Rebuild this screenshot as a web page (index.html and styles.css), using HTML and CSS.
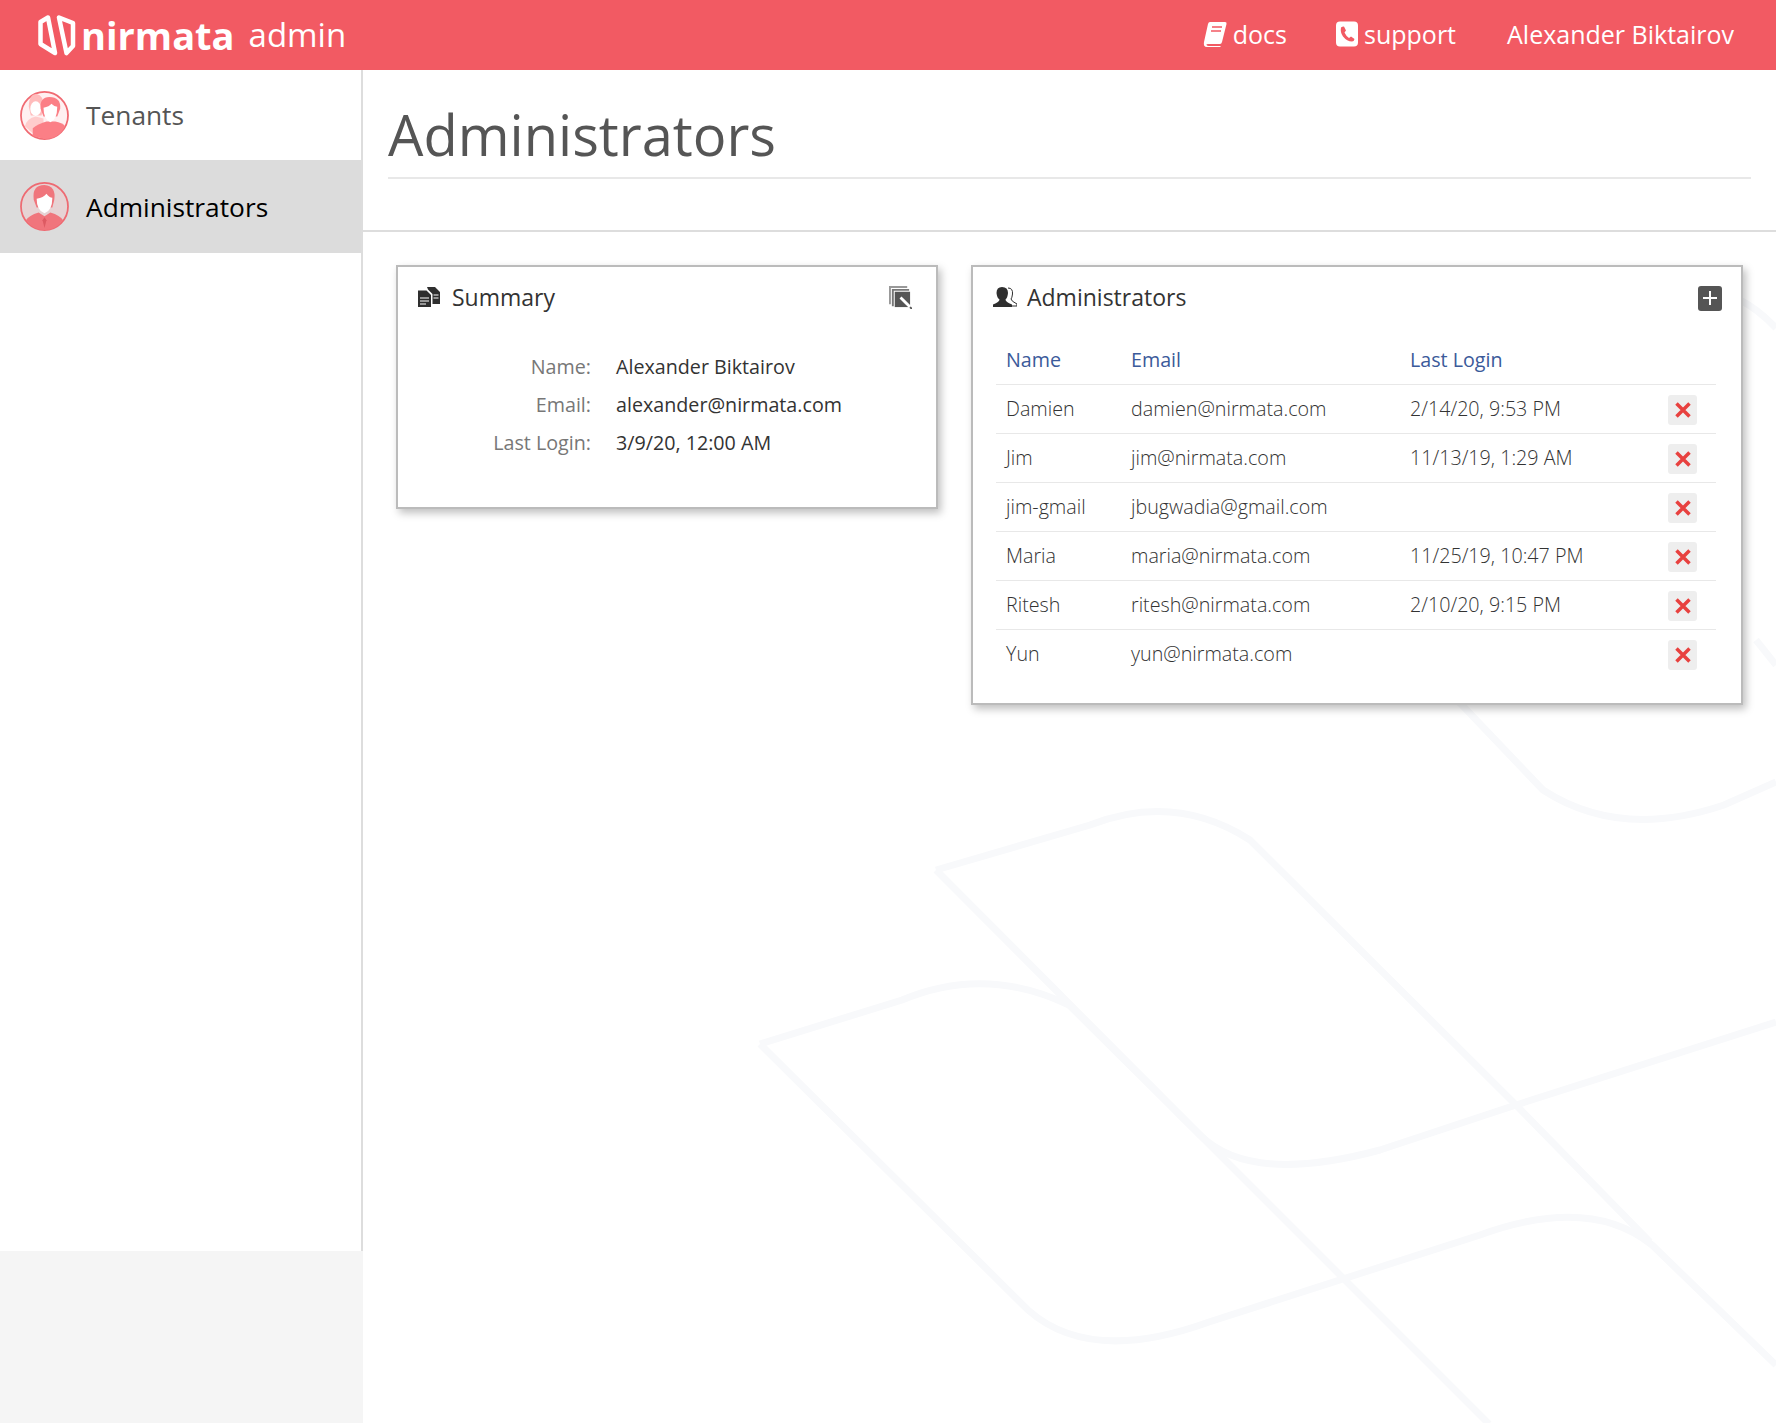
FILE: index.html
```html
<!DOCTYPE html>
<html lang="en">
<head>
    <meta charset="UTF-8">
    <meta name="viewport" content="width=device-width, initial-scale=1.0">
    <title>Administrators</title>
    <link rel="stylesheet" href="styles.css">
</head>
<body>
    <svg class="watermark" viewBox="0 0 1776 1423" fill="none" stroke="#f8f9fb" stroke-width="7">
        <path d="M936 870 L1090 825 Q1175 792 1250 840 L1516 1105 L1776 1022"/>
        <path d="M936 870 L1200 1135 Q1250 1185 1380 1150 L1516 1105 L1650 1242"/>
        <path d="M760 1044 L902 1000 Q985 965 1069 1005 L1200 1135 L1489 1424"/>
        <path d="M760 1044 L1028 1310 Q1090 1365 1209 1322 L1480 1235 Q1590 1195 1652 1245 L1776 1365"/>
        <path d="M1300 560 L1462 705 L1543 790 Q1620 840 1724 805 L1776 782"/>
        <path d="M1700 290 Q1740 290 1776 328"/>
        <path d="M1756 640 L1776 665"/>
    </svg>

    <header class="topbar">
        <div class="brand">
            <svg class="brand-mark" viewBox="0 0 40 42" fill="none" stroke="#fff" stroke-width="4.500" stroke-linejoin="round" stroke-linecap="round">
                <path d="M10 3.500 L2.500 8 V30 L17 39 Z"/>
                <path d="M21 3.500 L35 9 V32 L28.500 39 Z"/>
            </svg>
            <span class="brand-name">nirmata</span>
            <span class="brand-sub">admin</span>
        </div>
        <nav class="topnav">
            <a class="topnav-link docs-link">
                <svg class="topnav-icon" viewBox="0 0 24 26" fill="#fff">
                    <path d="M7 1 H22 Q24 1 23.500 3 L19 21 Q18.500 23 17 23 H5 Q3 23 3.500 24 Q4 25 6 25 H18 L17 26 H4 Q0 26 1 21 L5 3 Q5.500 1 7 1 Z"/>
                    <path d="M9 6 H19 M8 10 H18" stroke="#f25a63" stroke-width="1.600"/>
                </svg>
                docs
            </a>
            <a class="topnav-link">
                <svg class="topnav-icon phone" viewBox="0 0 22 25" fill="#fff">
                    <path fill-rule="evenodd" d="M4 0 H18 Q22 0 22 4 V21 Q22 25 18 25 H4 Q0 25 0 21 V4 Q0 0 4 0 Z M5 6 Q4 11 7 15 Q11 20 16 20 Q18 20 18.500 17.500 L15 15 L13 16.500 Q10 14.500 8.500 11 L10 9 L8 5 Q6 5 5 6 Z"/>
                </svg>
                support
            </a>
            <a class="topnav-link">Alexander Biktairov</a>
        </nav>
    </header>

    <div class="layout">
        <aside class="sidebar">
            <div class="side-menu">
                <a class="side-item">
                    <svg class="avatar" viewBox="0 0 50 50">
                        <circle cx="25" cy="25" r="24" fill="#fff0f1" stroke="#f06a72" stroke-width="1.800"/>
                        <path d="M5 36 Q7 28 16 26 L24 28 V44 L13 43 Z" fill="#fcc"/>
                        <path d="M9 16 Q9 3 17 3 Q24 4 24 16 L22 25 H11 Z" fill="#fbb"/>
                        <ellipse cx="16" cy="18" rx="5.500" ry="7.500" fill="#fff"/>
                        <path d="M13 46 L13 38 Q19 33 27 31 H36 Q43 32 46 36 Q40 49 25 49 Z" fill="#fb7f86"/>
                        <path d="M21 18 Q20 6 30 6 Q42 6 41 18 L38 26 H24 Z" fill="#fb7f86"/>
                        <path d="M24 17 Q30 16 32 13 Q35 16 38 16 Q38 29 31 32 Q24 29 24 17 Z" fill="#fff"/>
                    </svg>
                    Tenants
                </a>
                <a class="side-item active">
                    <svg class="avatar" viewBox="0 0 50 50">
                        <circle cx="25" cy="25" r="24" fill="#e6d3d4" stroke="#ee6a72" stroke-width="1.800"/>
                        <path d="M14 18 Q12 3 25 3 Q37 4 35 18 L33 26 H17 Z" fill="#f0757c"/>
                        <path d="M17 17 Q24 16 27 12 Q30 16 33 16 Q33 29 25 32 Q17 29 17 17 Z" fill="#fff"/>
                        <path d="M6 39 Q9 34 19 31 L25 35 L31 31 Q41 34 44 39 Q36 49 25 49 Q14 49 6 39 Z" fill="#f0757c"/>
                        <path d="M25 36 L23 39 L25 47 L27 39 Z" fill="#dd5a62"/>
                    </svg>
                    Administrators
                </a>
            </div>
        </aside>

        <main class="main">
            <div class="page-head">
                <h1>Administrators</h1>
            </div>
            <div class="cards">
                <section class="card card-summary">
                    <div class="card-title">
                        <svg class="title-icon" viewBox="0 0 22 20" fill="#2f2f2f">
                            <path d="M9 0 H17 L22 5 V17 H14.500 V7 L10 2.500 Z"/>
                            <path d="M0 3.500 H8.500 L13 8 V20 H0 Z"/>
                            <path d="M2 11 H11 M2 14 H11 M2 17 H8 M15.500 8 H20.500 M15.500 11 H20.500" stroke="#fff" stroke-width="1"/>
                        </svg>
                        <h2>Summary</h2>
                        <svg class="edit-icon" viewBox="0 0 24 24">
                            <path d="M0 0 H19 V2 H2 V19 H0 Z" fill="#999"/>
                            <path d="M3 3 H21 V5 H5 V21 H3 Z" fill="#777"/>
                            <rect x="6" y="6" width="16" height="16" fill="#555"/>
                            <path d="M12 12 L22 22" stroke="#fff" stroke-width="3"/>
                            <path d="M22 22 L24 24" stroke="#555" stroke-width="2"/>
                        </svg>
                    </div>
                    <table class="summary-table">
                        <tr><th>Name:</th><td>Alexander Biktairov</td></tr>
                        <tr><th>Email:</th><td>alexander@nirmata.com</td></tr>
                        <tr><th>Last Login:</th><td>3/9/20, 12:00 AM</td></tr>
                    </table>
                </section>

                <section class="card card-admins">
                    <div class="card-title">
                        <svg class="title-icon people" viewBox="0 0 24 20">
                            <path d="M15 1 Q20 1 19.500 7 Q19 11 18 12 Q18 14 24 17 V19 H18" fill="none" stroke="#2f2f2f" stroke-width="1"/>
                            <path d="M9 0 Q15 0 15 6 Q14.500 11 12.500 12.500 Q12.500 15 19 17.500 V20 H0 V17.500 Q6.500 15 6.500 12.500 Q4 11 3.500 6 Q3.500 0 9 0 Z" fill="#2f2f2f"/>
                        </svg>
                        <h2>Administrators</h2>
                        <span class="add-btn">
                            <svg viewBox="0 0 16 16" width="16" height="16"><path d="M8 1 V15 M1 8 H15" stroke="#fff" stroke-width="2"/></svg>
                        </span>
                    </div>
                    <table class="admin-table">
                        <thead>
                            <tr><th>Name</th><th>Email</th><th>Last Login</th><th></th></tr>
                        </thead>
                        <tbody>
                            <tr><td>Damien</td><td>damien@nirmata.com</td><td>2/14/20, 9:53 PM</td><td class="cell-del"><span class="del-btn"><svg viewBox="0 0 16 16" width="16" height="16"><path d="M1.500 1.500 L14.500 14.500 M14.500 1.500 L1.500 14.500" stroke="#e8413f" stroke-width="3.500"/></svg></span></td></tr>
                            <tr><td>Jim</td><td>jim@nirmata.com</td><td>11/13/19, 1:29 AM</td><td class="cell-del"><span class="del-btn"><svg viewBox="0 0 16 16" width="16" height="16"><path d="M1.500 1.500 L14.500 14.500 M14.500 1.500 L1.500 14.500" stroke="#e8413f" stroke-width="3.500"/></svg></span></td></tr>
                            <tr><td>jim-gmail</td><td>jbugwadia@gmail.com</td><td></td><td class="cell-del"><span class="del-btn"><svg viewBox="0 0 16 16" width="16" height="16"><path d="M1.500 1.500 L14.500 14.500 M14.500 1.500 L1.500 14.500" stroke="#e8413f" stroke-width="3.500"/></svg></span></td></tr>
                            <tr><td>Maria</td><td>maria@nirmata.com</td><td>11/25/19, 10:47 PM</td><td class="cell-del"><span class="del-btn"><svg viewBox="0 0 16 16" width="16" height="16"><path d="M1.500 1.500 L14.500 14.500 M14.500 1.500 L1.500 14.500" stroke="#e8413f" stroke-width="3.500"/></svg></span></td></tr>
                            <tr><td>Ritesh</td><td>ritesh@nirmata.com</td><td>2/10/20, 9:15 PM</td><td class="cell-del"><span class="del-btn"><svg viewBox="0 0 16 16" width="16" height="16"><path d="M1.500 1.500 L14.500 14.500 M14.500 1.500 L1.500 14.500" stroke="#e8413f" stroke-width="3.500"/></svg></span></td></tr>
                            <tr><td>Yun</td><td>yun@nirmata.com</td><td></td><td class="cell-del"><span class="del-btn"><svg viewBox="0 0 16 16" width="16" height="16"><path d="M1.500 1.500 L14.500 14.500 M14.500 1.500 L1.500 14.500" stroke="#e8413f" stroke-width="3.500"/></svg></span></td></tr>
                        </tbody>
                    </table>
                </section>
            </div>
        </main>
    </div>
</body>
</html>
```

FILE: styles.css
```css
* {
    box-sizing: border-box;
}
body {
    font-family: "Open Sans", Arial, sans-serif;
    margin: 0;
    height: 1423px;
    overflow: hidden;
    position: relative;
    background: #fff;
    color: #333;
}
.watermark {
    position: absolute;
    top: 0;
    left: 0;
    width: 1776px;
    height: 1423px;
}
.topbar {
    position: relative;
    height: 70px;
    background: #f25a63;
    color: #fff;
    display: flex;
    justify-content: space-between;
    align-items: center;
    padding: 0 42px 0 38px;
}
.brand {
    display: flex;
    align-items: center;
}
.brand-mark {
    width: 40px;
    height: 42px;
}
.brand-name {
    font-family: "Open Sans", Arial, sans-serif;
    font-weight: 700;
    font-size: 38px;
    line-height: 44px;
    margin-left: 3px;
}
.brand-sub {
    font-size: 33px;
    line-height: 44px;
    margin-left: 14px;
}
.topnav {
    display: flex;
    align-items: center;
    gap: 51px;
    margin-top: -2px;
}
.topnav-link {
    display: flex;
    align-items: center;
    font-size: 25px;
    line-height: 34px;
}
.docs-link {
    margin-right: -2px;
}
.topnav-icon {
    width: 24px;
    height: 26px;
    margin-right: 6px;
}
.topnav-icon.phone {
    width: 22px;
}
.layout {
    position: relative;
    display: flex;
    height: 1353px;
}
.sidebar {
    width: 363px;
    flex: none;
    background: #f5f5f5;
}
.side-menu {
    height: 1181px;
    background: #fff;
    border-right: 2px solid #ddd;
}
.side-item {
    display: flex;
    align-items: center;
    height: 90px;
    padding-left: 20px;
    font-size: 26.300px;
    color: #555;
}
.side-item.active {
    height: 93px;
    background: #dcdcdc;
    color: #000;
}
.avatar {
    width: 49px;
    height: 49px;
    margin-right: 17px;
}
.main {
    flex: 1;
}
.page-head {
    height: 162px;
    padding: 0 25px 0;
    border-bottom: 2px solid #ddd;
}
.page-head h1 {
    margin: 0;
    height: 109px;
    font-size: 56px;
    font-weight: 400;
    line-height: 128px;
    color: #555;
    border-bottom: 2px solid #e8e8e8;
}
.cards {
    display: flex;
    align-items: flex-start;
    gap: 33px;
    padding: 33px 0 0 33px;
}
.card {
    background: #fff;
    border: 2px solid #bbb;
    box-shadow: 3px 4px 8px rgba(0, 0, 0, 0.25);
}
.card-summary {
    width: 542px;
    height: 244px;
}
.card-admins {
    width: 772px;
    height: 440px;
}
.card-title {
    display: flex;
    align-items: center;
    height: 58px;
    padding: 2px 22px 0 20px;
}
.card-title h2 {
    flex: 1;
    margin: 0;
    font-size: 23px;
    font-weight: 400;
    color: #333;
}
.title-icon {
    width: 22px;
    height: 20px;
    margin-right: 12px;
}
.title-icon.people {
    width: 24px;
    margin-right: 10px;
}
.edit-icon {
    width: 23px;
    height: 23px;
    margin-right: 2px;
}
.add-btn {
    display: flex;
    align-items: center;
    justify-content: center;
    width: 24px;
    height: 25px;
    margin: 2px -3px 0 0;
    background: #555;
    border-radius: 3px;
}
.summary-table {
    border-collapse: collapse;
    margin-top: 22px;
    font-size: 19.700px;
}
.summary-table th {
    width: 218px;
    padding: 0 25px 0 0;
    height: 38.200px;
    text-align: right;
    font-weight: 400;
    color: #777;
}
.summary-table td {
    padding: 0;
    color: #333;
}
.admin-table {
    border-collapse: collapse;
    width: 720px;
    margin: 10px 0 0 23px;
    font-size: 19.700px;
}
.admin-table th {
    height: 49px;
    padding: 0 0 0 10px;
    text-align: left;
    font-weight: 400;
    color: #3b5a9a;
}
.admin-table td {
    height: 49px;
    padding: 0 0 0 10px;
    font-weight: 300;
    color: #333;
    border-top: 1px solid #e8e8e8;
}
.admin-table th:nth-child(1) {
    width: 125px;
}
.admin-table th:nth-child(2) {
    width: 279px;
}
.admin-table th:nth-child(3) {
    width: 268px;
}
.admin-table td.cell-del {
    padding: 0;
}
.del-btn {
    display: flex;
    align-items: center;
    justify-content: center;
    width: 29px;
    height: 30px;
    margin-top: 3px;
    background: #eee;
    border-radius: 3px;
}
```
